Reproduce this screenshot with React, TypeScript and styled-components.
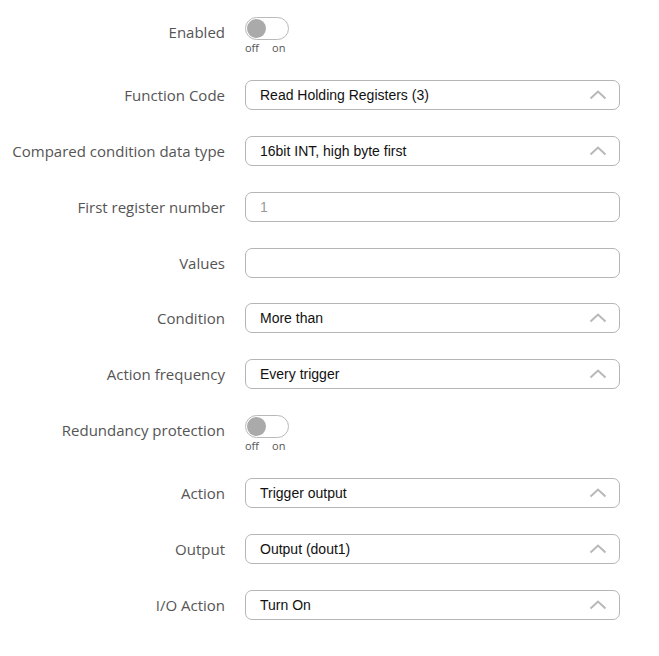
import React, { useState } from "react";
import styled, { createGlobalStyle } from "styled-components";

const GlobalStyle = createGlobalStyle`
  body {
    margin: 0;
    background: #ffffff;
    font-family: "Open Sans", "Liberation Sans", sans-serif;
  }
`;

const Form = styled.div`
  display: flex;
  flex-direction: column;
  gap: 25.8px;
  padding-top: 17px;
  width: 659px;
`;

const Row = styled.div`
  display: grid;
  grid-template-columns: 225px 375px;
  column-gap: 20px;
  align-items: start;
`;

const Label = styled.div`
  text-align: right;
  font-size: 15px;
  line-height: 30px;
  color: #555555;
  white-space: nowrap;
`;

const Field = styled.div<{ $placeholder?: boolean }>`
  box-sizing: border-box;
  height: 30px;
  border: 1px solid #b5b5b5;
  border-radius: 7px;
  display: flex;
  align-items: center;
  padding: 0 12px 0 14px;
  font-family: "Liberation Sans", Arial, sans-serif;
  font-size: 14px;
  color: ${(p) => (p.$placeholder ? "#9a9a9a" : "#111111")};
`;

const FieldText = styled.span`
  flex: 1;
`;

const ToggleBox = styled.div`
  display: flex;
  flex-direction: column;
  height: 37.4px;
`;

const Track = styled.div<{ $on: boolean }>`
  box-sizing: border-box;
  width: 44px;
  height: 23px;
  border: 1px solid #b9b9b9;
  border-radius: 12px;
  background: #ffffff;
  padding: 1px;
  display: flex;
  justify-content: ${(p) => (p.$on ? "flex-end" : "flex-start")};
  cursor: pointer;
`;

const Knob = styled.div`
  width: 19px;
  height: 19px;
  border-radius: 50%;
  background: #aaaaaa;
`;

const ToggleLabels = styled.div`
  display: flex;
  gap: 13px;
  font-size: 11px;
  line-height: 14px;
  color: #555555;
  padding-top: 1px;
`;

const Chevron = () => (
  <svg width="18" height="10" viewBox="0 0 18 10">
    <path d="M1.5 8.5 L9 1.5 L16.5 8.5" fill="none" stroke="#b8b8b8" strokeWidth="2" />
  </svg>
);

const Toggle = () => {
  const [on, setOn] = useState(false);
  return (
    <ToggleBox>
      <Track $on={on} onClick={() => setOn(!on)}>
        <Knob />
      </Track>
      <ToggleLabels>
        <span>off</span>
        <span>on</span>
      </ToggleLabels>
    </ToggleBox>
  );
};

const Select = ({ value }: { value: string }) => (
  <Field>
    <FieldText>{value}</FieldText>
    <Chevron />
  </Field>
);

const rows: { label: string; kind: "toggle" | "select" | "input"; value?: string; placeholder?: string }[] = [
  { label: "Enabled", kind: "toggle" },
  { label: "Function Code", kind: "select", value: "Read Holding Registers (3)" },
  { label: "Compared condition data type", kind: "select", value: "16bit INT, high byte first" },
  { label: "First register number", kind: "input", placeholder: "1" },
  { label: "Values", kind: "input" },
  { label: "Condition", kind: "select", value: "More than" },
  { label: "Action frequency", kind: "select", value: "Every trigger" },
  { label: "Redundancy protection", kind: "toggle" },
  { label: "Action", kind: "select", value: "Trigger output" },
  { label: "Output", kind: "select", value: "Output (dout1)" },
  { label: "I/O Action", kind: "select", value: "Turn On" },
];

export default function App() {
  return (
    <>
      <GlobalStyle />
      <Form>
        {rows.map((r) => (
          <Row key={r.label}>
            <Label>{r.label}</Label>
            {r.kind === "toggle" && <Toggle />}
            {r.kind === "select" && <Select value={r.value || ""} />}
            {r.kind === "input" && (
              <Field $placeholder>
                <FieldText>{r.placeholder || ""}</FieldText>
              </Field>
            )}
          </Row>
        ))}
      </Form>
    </>
  );
}
